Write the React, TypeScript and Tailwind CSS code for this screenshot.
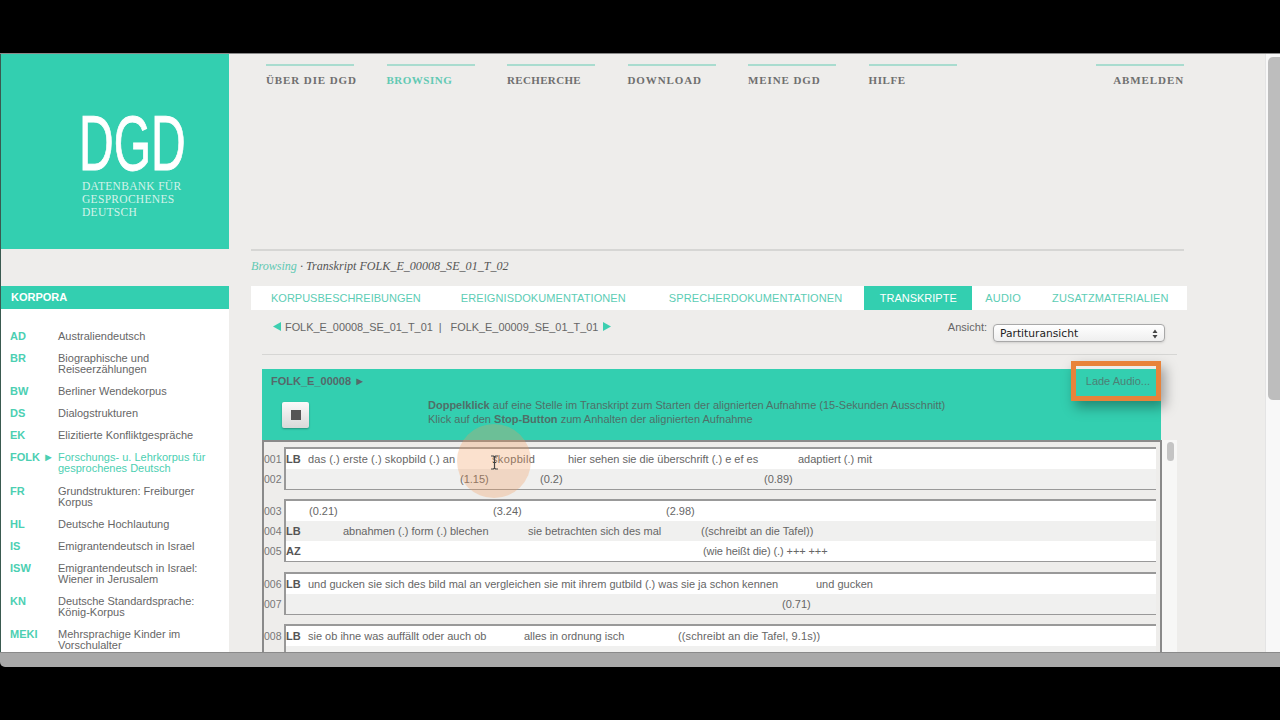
import React from "react";

const navItems = [
  { label: "Über die DGD", cls: "text-[#6f6f6f] tracking-[0.9px]" },
  { label: "Browsing", cls: "text-[#62c9b3] tracking-[0.5px]" },
  { label: "Recherche", cls: "text-[#6f6f6f] tracking-[0.35px]" },
  { label: "Download", cls: "text-[#6f6f6f] tracking-[0.9px]" },
  { label: "Meine DGD", cls: "text-[#6f6f6f] tracking-[0.9px]" },
  { label: "Hilfe", cls: "text-[#6f6f6f] tracking-[0.6px]" },
];

const korpora = [
  { code: "AD", name: ["Australiendeutsch"] },
  { code: "BR", name: ["Biographische und", "Reiseerzählungen"] },
  { code: "BW", name: ["Berliner Wendekorpus"] },
  { code: "DS", name: ["Dialogstrukturen"] },
  { code: "EK", name: ["Elizitierte Konfliktgespräche"] },
  { code: "FOLK ►", name: ["Forschungs- u. Lehrkorpus für", "gesprochenes Deutsch"], active: true },
  { code: "FR", name: ["Grundstrukturen: Freiburger", "Korpus"] },
  { code: "HL", name: ["Deutsche Hochlautung"] },
  { code: "IS", name: ["Emigrantendeutsch in Israel"] },
  { code: "ISW", name: ["Emigrantendeutsch in Israel:", "Wiener in Jerusalem"] },
  { code: "KN", name: ["Deutsche Standardsprache:", "König-Korpus"] },
  { code: "MEKI", name: ["Mehrsprachige Kinder im", "Vorschulalter"] },
];

const tabs = [
  { label: "Korpusbeschreibungen", cls: "ml-[20px] text-[#5ccdb5]" },
  { label: "Ereignisdokumentationen", cls: "ml-[40px] tracking-[0.1px] text-[#5ccdb5]" },
  { label: "Sprecherdokumentationen", cls: "ml-[43px] tracking-[0.09px] text-[#5ccdb5]" },
  { label: "Transkripte", cls: "ml-[22px] w-[108px] text-center bg-[#33cfb0] text-white" },
  { label: "Audio", cls: "ml-[13px] tracking-[0.2px] text-[#5ccdb5]" },
  { label: "Zusatzmaterialien", cls: "ml-[31px] tracking-[0.12px] text-[#5ccdb5]" },
];

type Row = { num: string; speaker?: string; cells: [string, string][] };
type Block = { gap: string; rows: Row[] };

const blocks: Block[] = [
  {
    gap: "mb-[9px]",
    rows: [
      {
        num: "001",
        speaker: "LB",
        cells: [
          ["w-[184px] tracking-[0.09px]", "das (.) erste (.) skopbild (.) an"],
          ["w-[76px] tracking-[0.35px]", "skopbild"],
          ["w-[230px]", "hier sehen sie die überschrift (.) e ef es"],
          ["w-auto", "adaptiert (.) mit"],
        ],
      },
      {
        num: "002",
        cells: [
          ["w-[152px]", ""],
          ["w-[80px]", "(1.15)"],
          ["w-[224px]", "(0.2)"],
          ["w-auto", "(0.89)"],
        ],
      },
    ],
  },
  {
    gap: "mb-[10px]",
    rows: [
      {
        num: "003",
        cells: [
          ["w-[185px] pl-[1px]", "(0.21)"],
          ["w-[173px]", "(3.24)"],
          ["w-auto", "(2.98)"],
        ],
      },
      {
        num: "004",
        speaker: "LB",
        cells: [
          ["w-[35px]", ""],
          ["w-[185px]", "abnahmen (.) form (.) blechen"],
          ["w-[173px]", "sie betrachten sich des mal"],
          ["w-auto", "((schreibt an die Tafel))"],
        ],
      },
      {
        num: "005",
        speaker: "AZ",
        cells: [
          ["w-[395px]", ""],
          ["w-auto tracking-[-0.1px]", "(wie heißt die) (.) +++ +++"],
        ],
      },
    ],
  },
  {
    gap: "mb-[9px]",
    rows: [
      {
        num: "006",
        speaker: "LB",
        cells: [
          ["w-[508px]", "und gucken sie sich des bild mal an vergleichen sie mit ihrem gutbild (.) was sie ja schon kennen"],
          ["w-auto", "und gucken"],
        ],
      },
      {
        num: "007",
        cells: [
          ["w-[474px]", ""],
          ["w-auto", "(0.71)"],
        ],
      },
    ],
  },
  {
    gap: "mb-0",
    rows: [
      {
        num: "008",
        speaker: "LB",
        cells: [
          ["w-[216px]", "sie ob ihne was auffällt oder auch ob"],
          ["w-[154px]", "alles in ordnung isch"],
          ["w-auto tracking-[0.1px]", "((schreibt an die Tafel, 9.1s))"],
        ],
      },
      { num: "", cells: [] },
    ],
  },
];

const Triangle = ({ left }: { left?: boolean }) => (
  <svg width="8" height="9" viewBox="0 0 8 9" className="mt-[1px] text-[#3ccfb0]">
    <path d={left ? "M8 0v9L0 4.5z" : "M0 0v9l8-4.5z"} fill="currentColor" />
  </svg>
);

const Sidebar = () => (
  <aside className="w-[229px] shrink-0 flex flex-col border-l border-[#3a5a50]">
    <div className="h-[195px] bg-[#33cfb0] pl-[81px] pt-[54px] shrink-0">
      <div className="h-[70px] w-[110px] -ml-[3px] origin-left scale-x-[0.615] text-white text-[78px] leading-[70px] whitespace-nowrap [-webkit-text-stroke:1px_white]">
        DGD
      </div>
      <div className="mt-[2px] text-[#d3f3ea] font-['Liberation_Serif',serif] text-[11.5px] leading-[13px] tracking-[0.3px]">
        <p>DATENBANK FÜR</p>
        <p>GESPROCHENES</p>
        <p>DEUTSCH</p>
      </div>
    </div>
    <div className="mt-[37px] h-[23px] shrink-0 bg-[#33cfb0] pl-[10px] flex items-center text-white text-[11px] font-bold">
      KORPORA
    </div>
    <ul className="flex-1 bg-white pt-[22px] overflow-hidden">
      {korpora.map((k) => (
        <li key={k.code} className={`flex text-[11px] leading-[11px] ${k.active ? "pb-[12px]" : "pb-[11px]"}`}>
          <span className="w-[57px] shrink-0 pl-[9px] font-bold text-[#4ccfb2] whitespace-nowrap">{k.code}</span>
          <span className={k.active ? "text-[#4ccfb2]" : "text-[#666]"}>
            {k.name.map((line) => (
              <span key={line} className="block whitespace-nowrap">
                {line}
              </span>
            ))}
          </span>
        </li>
      ))}
    </ul>
  </aside>
);

const TranscriptBlock = ({ block }: { block: Block }) => (
  <div className={`flex ${block.gap}`}>
    <div className="w-[20px] shrink-0 pt-[2px] text-[#777]">
      {block.rows.map((r) => (
        <div key={r.num} className="h-[20px] leading-[20px] text-[10.5px]">
          {r.num}
        </div>
      ))}
    </div>
    <div className="w-[872px] border-l-2 border-t-2 border-b border-[#999]">
      {block.rows.map((r, i) => (
        <div key={r.num} className={`h-[20px] flex leading-[20px] ${i % 2 === 0 ? "bg-white" : "bg-[#f0f0ef]"}`}>
          <span className="w-[22px] shrink-0 font-bold text-[#555]">{r.speaker}</span>
          {r.cells.map(([w, text], j) => (
            <span key={j} className={`${w} shrink-0 whitespace-nowrap text-[#666]`}>
              {text}
            </span>
          ))}
        </div>
      ))}
    </div>
  </div>
);

const App = () => (
  <div className="h-[720px] w-[1280px] bg-black overflow-hidden font-['Liberation_Sans',Arial,sans-serif]">
    <div className="h-[53px]" />
    <div className="h-[614px] flex flex-col rounded-bl-[5px] overflow-hidden">
      <div className="h-[599px] flex bg-[#eeedeb] border-t border-[#8a8a8a] overflow-hidden">
        <Sidebar />
        <main className="w-[1036px] shrink-0 pl-[22px]">
          <div className="h-[197px] w-[933px] border-b-2 border-[#d6d6d4] pl-[15px] pt-[10px]">
            <nav className="flex gap-[32.5px] font-['Liberation_Serif',serif] font-bold text-[11px] uppercase">
              {navItems.map((n) => (
                <a key={n.label} className={`w-[88px] border-t-2 border-[#a9dccf] pt-[6px] whitespace-nowrap ${n.cls}`}>
                  {n.label}
                </a>
              ))}
              <a className="ml-auto w-[88px] border-t-2 border-[#a9dccf] pt-[6px] text-right tracking-[0.9px] text-[#6f6f6f]">
                Abmelden
              </a>
            </nav>
          </div>
          <div className="h-[35px] pt-[8px] font-['Liberation_Serif',serif] italic text-[12.1px] leading-[14px] text-[#555]">
            <span className="text-[#62c9b3]">Browsing</span> · Transkript FOLK_E_00008_SE_01_T_02
          </div>
          <div className="h-[24px] w-[936px] bg-white flex text-[11px] uppercase leading-[24px] whitespace-nowrap">
            {tabs.map((t) => (
              <span key={t.label} className={t.cls}>
                {t.label}
              </span>
            ))}
          </div>
          <div className="ml-[11px] w-[915px] h-[45px] border-b border-[#d6d6d4] pt-[11px] pl-[11px] pr-[12px] flex items-start text-[10.9px] leading-[12px] text-[#666]">
            <Triangle left />
            <span className="ml-[4px]">FOLK_E_00008_SE_01_T_01</span>
            <span className="ml-[6px] mr-[9px]">|</span>
            <span>FOLK_E_00009_SE_01_T_01</span>
            <span className="ml-[5px]">
              <Triangle />
            </span>
            <span className="ml-auto mr-[6px] text-[11px]">Ansicht:</span>
            <div className="mt-[3px] w-[172px] h-[18px] rounded-[4px] border border-[#a8a8a8] bg-gradient-to-b from-white to-[#efefef] shadow-sm flex items-center justify-between pl-[6px] pr-[6px] pt-[1px] font-['DejaVu_Sans',sans-serif] text-[10.7px] text-[#222]">
              <span>Partituransicht</span>
              <svg width="6" height="10" viewBox="0 0 6 10" className="text-[#444]">
                <path d="M3 0.5 5.5 4H0.5zM3 9.5 0.5 6h5z" fill="currentColor" />
              </svg>
            </div>
          </div>
          <div className="relative ml-[11px] mt-[14px] w-[915px]">
            <div className="w-[899px] h-[71px] bg-[#33cfb0] text-[#4f6f68] text-[11px]">
              <div className="flex justify-between pt-[6px] pl-[9px] pr-[11px] leading-[12px]">
                <span className="font-bold text-[#55696a]">FOLK_E_00008 ►</span>
                <span className="text-[#4d7f75]">Lade Audio...</span>
              </div>
              <div className="flex items-start mt-[11px]">
                <button className="ml-[20px] mt-[4px] w-[27px] h-[26px] rounded-[2px] bg-gradient-to-b from-[#fafafa] to-[#d9d9d9] shadow-[0_1px_2px_rgba(0,0,0,0.3)] flex items-center justify-center">
                  <span className="block w-[10px] h-[10px] bg-[#555]" />
                </button>
                <div className="ml-[119px] leading-[14px]">
                  <p>
                    <b>Doppelklick</b> auf eine Stelle im Transkript zum Starten der alignierten Aufnahme (15-Sekunden Ausschnitt)
                  </p>
                  <p>
                    Klick auf den <b>Stop-Button</b> zum Anhalten der alignierten Aufnahme
                  </p>
                </div>
              </div>
            </div>
            <div className="flex">
              <div className="w-[900px] h-[230px] shrink-0 border-2 border-[#8a8a8a] pt-[5px] text-[11px] overflow-hidden">
                {blocks.map((b) => (
                  <TranscriptBlock key={b.rows[0].num} block={b} />
                ))}
              </div>
              <div className="w-[15px] h-[230px] bg-[#f7f7f6] pl-[5px] pt-[2px]">
                <div className="w-[7px] h-[19px] rounded-full bg-[#c4c4c4]" />
              </div>
            </div>
            {/* highlight overlays from the screencast */}
            <div className="absolute right-[16px] top-[-8px] w-[90px] h-[40px] border-[5px] border-[#e8833a] shadow-[4px_6px_12px_rgba(0,0,0,0.35)]" />
            <div className="absolute left-[195px] top-[55px] w-[74px] h-[74px] rounded-full bg-[#f39a5c]/30" />
            <svg width="9" height="15" viewBox="0 0 9 15" className="absolute left-[228px] top-[86px] text-[#444]">
              <path d="M1 1h2.5L4.5 2 5.5 1H8M4.5 2v11M1 14h2.5l1-1 1 1H8M3 7.5h3" fill="none" stroke="currentColor" strokeWidth="1.2" />
            </svg>
          </div>
        </main>
        <div className="w-[15px] shrink-0 bg-[#f8f8f8] border-l border-[#e4e4e4] pl-[2px] pt-[3px]">
          <div className="h-[343px] rounded-l-[5px] bg-[#bdbdbd]" />
        </div>
      </div>
      <div className="h-[15px] bg-[#a9a9a9] border-t border-[#8a8a8a]" />
    </div>
  </div>
);

export default App;
